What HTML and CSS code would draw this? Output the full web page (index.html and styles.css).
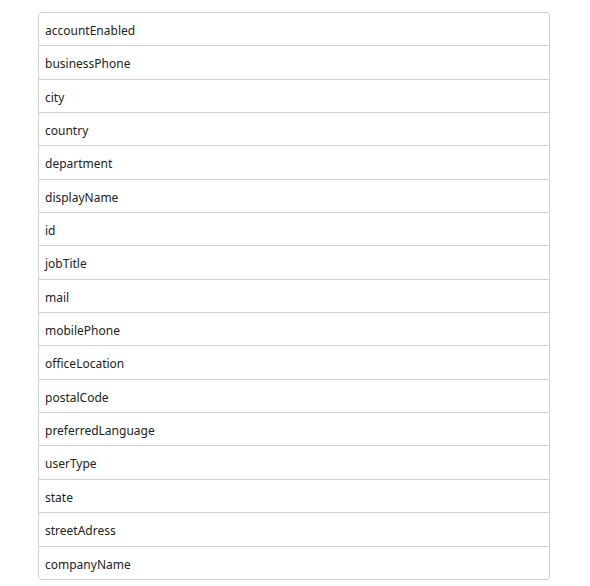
FILE: index.html
```html
<!DOCTYPE html>
<html lang="en">
<head>
  <meta charset="UTF-8" />
  <title>User properties</title>
  <link rel="stylesheet" href="styles.css">
</head>
<body>
  <ul class="prop-list">
    <li>accountEnabled</li>
    <li>businessPhone</li>
    <li>city</li>
    <li>country</li>
    <li>department</li>
    <li>displayName</li>
    <li>id</li>
    <li>jobTitle</li>
    <li>mail</li>
    <li>mobilePhone</li>
    <li>officeLocation</li>
    <li>postalCode</li>
    <li>preferredLanguage</li>
    <li>userType</li>
    <li>state</li>
    <li>streetAdress</li>
    <li>companyName</li>
  </ul>
</body>
</html>
```

FILE: styles.css
```css
body {
  margin: 0;
  padding: 12px 0 0 38px;
  background: #fff;
  font-family: "Noto Sans", "Open Sans", sans-serif;
  font-size: 12px;
  color: #222;
}

.prop-list {
  list-style: none;
  margin: 0;
  padding: 0;
  width: 510px;
  border: 1px solid #cfcfcf;
  border-radius: 4px;
}

.prop-list li {
  height: 29.35px;
  line-height: 29.35px;
  padding: 3px 6px 0;
  border-top: 1px solid #cfcfcf;
}

.prop-list li:first-child {
  border-top: none;
}
```
